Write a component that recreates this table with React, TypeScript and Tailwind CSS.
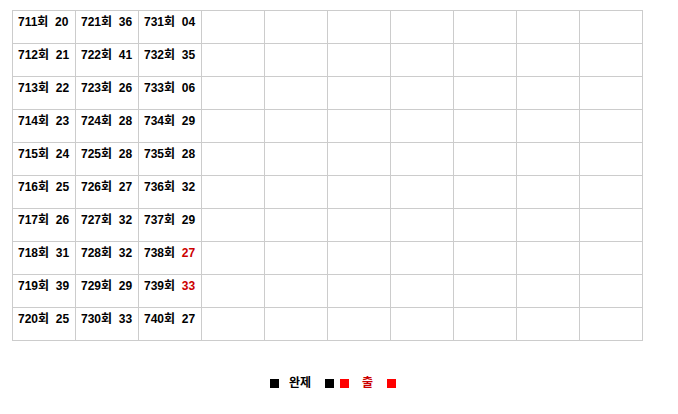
const rows = [
  [["711", "20"], ["721", "36"], ["731", "04"]],
  [["712", "21"], ["722", "41"], ["732", "35"]],
  [["713", "22"], ["723", "26"], ["733", "06"]],
  [["714", "23"], ["724", "28"], ["734", "29"]],
  [["715", "24"], ["725", "28"], ["735", "28"]],
  [["716", "25"], ["726", "27"], ["736", "32"]],
  [["717", "26"], ["727", "32"], ["737", "29"]],
  [["718", "31"], ["728", "32"], ["738", "27", true]],
  [["719", "39"], ["729", "29"], ["739", "33", true]],
  [["720", "25"], ["730", "33"], ["740", "27"]],
] as [string, string, boolean?][][];

const empty = Array.from({ length: 7 });

export default function App() {
  return (
    <div
      className="w-[678px] h-[414px] bg-white pt-[10px] pl-[12px]"
      style={{ fontFamily: '"Liberation Sans", "Noto Sans CJK KR", sans-serif' }}
    >
      <table className="border-collapse table-fixed w-[631px]">
        <tbody>
          {rows.map((row, i) => (
            <tr key={i} className="h-[33px]">
              {row.map(([no, num, hot], j) => (
                <td
                  key={j}
                  className="w-[63px] border border-[#cccccc] align-top pl-[5px] pt-[3px] text-[12px] leading-[16px] font-bold text-black whitespace-nowrap"
                >
                  {no}회&nbsp; <span className={hot ? "text-[#cc0000]" : ""}>{num}</span>
                </td>
              ))}
              {empty.map((_, k) => (
                <td key={"e" + k} className="w-[63px] border border-[#cccccc]" />
              ))}
            </tr>
          ))}
        </tbody>
      </table>

      <div className="w-[666px] -ml-[12px] mt-[34px] flex justify-center items-center text-[12px] font-bold leading-[16px]">
        <span className="w-[9px] h-[9px] bg-black" />
        <span className="ml-[10px] text-black">완제</span>
        <span className="ml-[14px] w-[9px] h-[9px] bg-black" />
        <span className="ml-[6px] w-[9px] h-[9px] bg-[#ff0000]" />
        <span className="ml-[13px] text-[#cc0000]">출</span>
        <span className="ml-[14px] w-[9px] h-[9px] bg-[#ff0000]" />
      </div>
    </div>
  );
}
